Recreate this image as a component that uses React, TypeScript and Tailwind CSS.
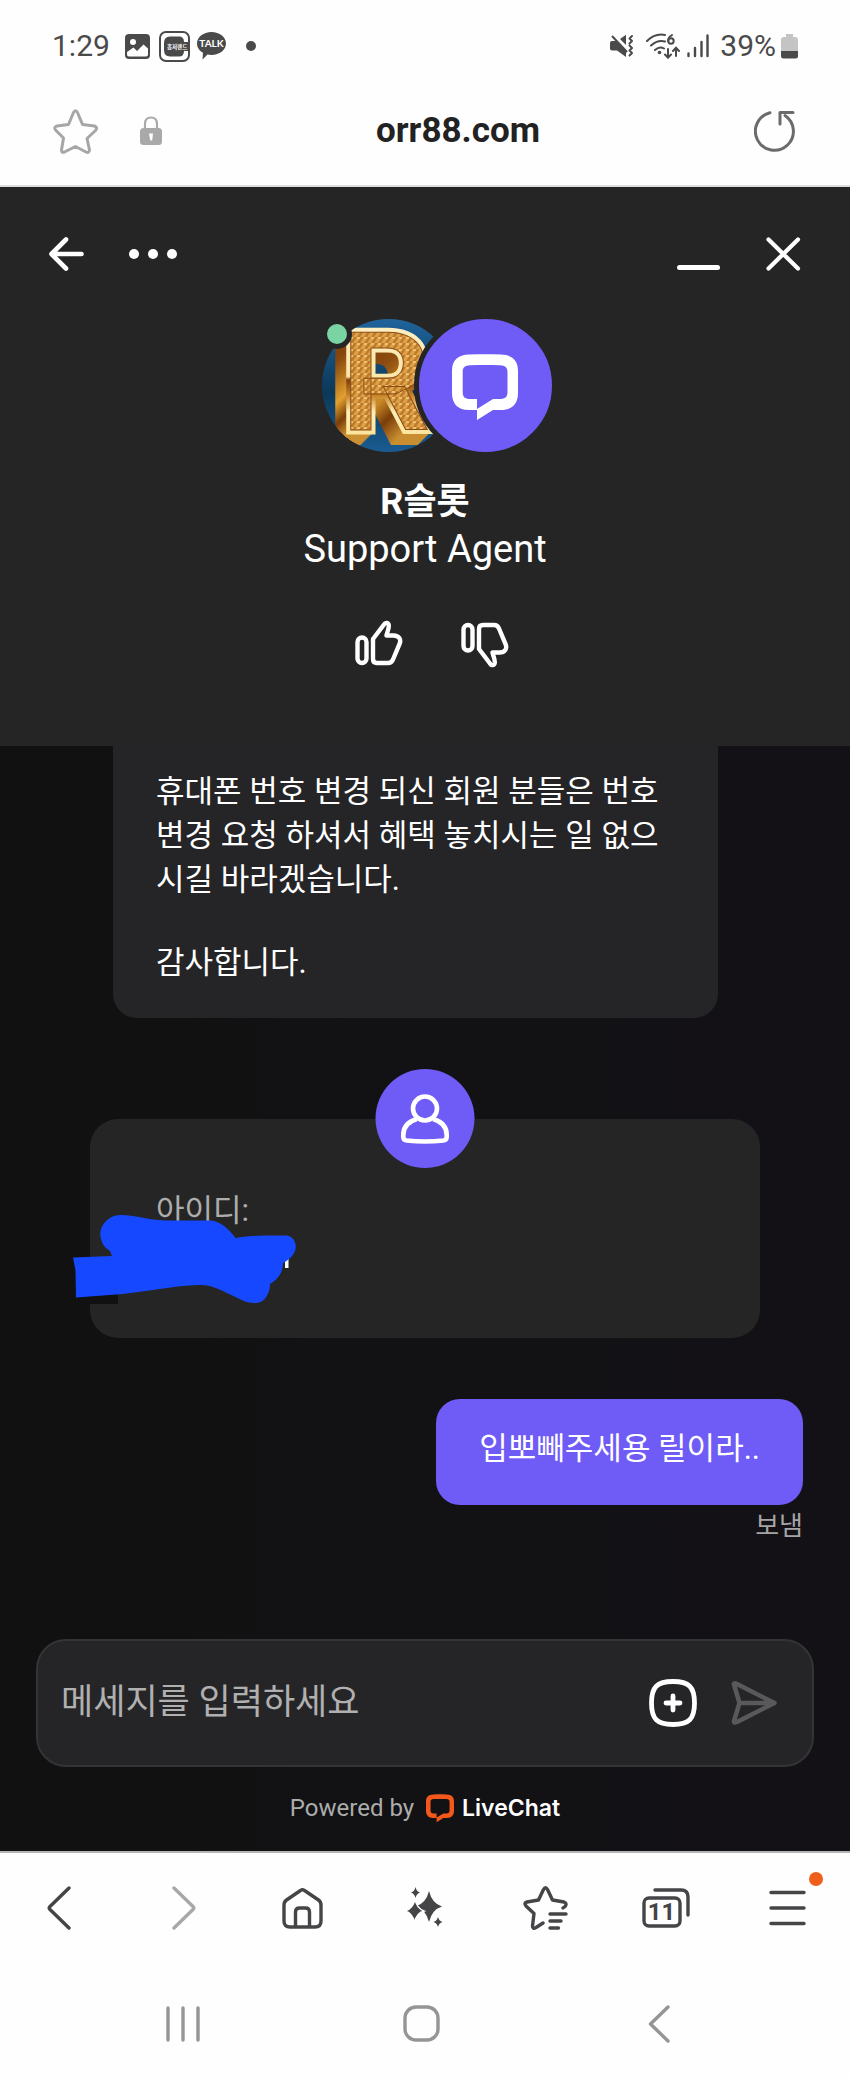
import React from "react";

type IconProps = { className?: string };

const LIVECHAT_PATH =
  "M25 56H17C6 56 0 50 0 39V17C0 6 6 1 17 .6C28 0 38 0 49 .6C60 1 66 6 66 17V39C66 50 60 56 49 56H41L25 66V55L41 45H48C53 45 55.5 43 55.5 38V18C55.5 13 53 11.5 48 11.2C38 10.8 28 10.8 18 11.2C13 11.5 10.7 13 10.7 18V38C10.7 43 13 45 18 45H25Z";

function LiveChatMark({ className }: IconProps) {
  return (
    <svg viewBox="0 0 66 67" className={className} fill="currentColor" aria-hidden="true">
      <path d={LIVECHAT_PATH} />
    </svg>
  );
}

function GalleryIcon() {
  return (
    <svg width="25" height="25" viewBox="0 0 25 25" aria-hidden="true">
      <rect width="25" height="25" rx="4" fill="#4a4a4a" />
      <circle cx="8" cy="8" r="3" fill="#fff" />
      <path d="M2 18L8.5 13.5L12 17L18.5 10.500L23 14.500V20.500Q23 22.500 21 22.500H4Q2 22.500 2 20.500Z" fill="#fff" />
    </svg>
  );
}

function ShopIcon() {
  return (
    <svg width="31" height="31" viewBox="0 0 31 31" aria-hidden="true">
      <rect x="1" y="1" width="29" height="29" rx="6" fill="#fff" stroke="#4a4a4a" strokeWidth="2" />
      <path d="M25 11Q25 5.500 20 5.500H11Q5 5.500 5 12V19Q5 25.500 11 25.500H20Q25 25.500 25 20H29V11Z" fill="#4a4a4a" />
      <text x="8" y="17.500" fontSize="5.500" fontWeight="700" fill="#fff" fontFamily="Noto Sans CJK KR, sans-serif">홈저랜드</text>
    </svg>
  );
}

function TalkIcon() {
  return (
    <svg width="29" height="28" viewBox="0 0 29 28" aria-hidden="true">
      <path d="M14.500 0C22.500 0 29 5 29 11.500S22.500 23 14.500 23C13 23 11.500 22.900 10.500 22.600L5.500 27.500L6 20.700C2.300 18.700 0 15.300 0 11.500C0 5 6.500 0 14.500 0Z" fill="#4a4a4a" />
      <text x="14.500" y="15.200" textAnchor="middle" fontSize="10" fontWeight="700" fill="#fff" fontFamily="Lato, sans-serif">TALK</text>
    </svg>
  );
}

function MuteIcon() {
  return (
    <svg width="24" height="24" viewBox="0 0 24 24" aria-hidden="true">
      <path d="M0 9Q0 7 2 7H6L16 17V23L7 16.500H2Q0 16.500 0 14.500Z" fill="#4a4a4a" />
      <path d="M10 5L16 .8V11Z" fill="#4a4a4a" />
      <path d="M2 2L17 18" stroke="#4a4a4a" strokeWidth="2" fill="none" />
      <path d="M22 2L19.500 4.500L22 7L19.500 9.500M19.500 11.500L22 14L19.500 16.500L22 19L19.500 21.500" stroke="#4a4a4a" strokeWidth="2" fill="none" strokeLinecap="round" strokeLinejoin="round" />
    </svg>
  );
}

function WifiIcon() {
  return (
    <svg width="34" height="26" viewBox="0 0 34 26" fill="none" stroke="#4a4a4a" strokeWidth="2" strokeLinecap="round" aria-hidden="true">
      <path d="M1 8Q9 0 19 2M5 12.500Q11.500 6.500 19 8.500M9 17Q13.500 13 18 15.500" />
      <circle cx="13.500" cy="19.500" r="1.800" fill="#4a4a4a" stroke="none" />
      <path d="M26 2Q22 4.500 22 8" />
      <circle cx="25" cy="8" r="2.700" />
      <path d="M22 16V24.500M19 21.500L22 24.700L25 21.500M30 23V15M27 18L30 14.800L33 18" />
    </svg>
  );
}

function SignalIcon() {
  return (
    <svg width="22" height="24" viewBox="0 0 22 24" stroke="#4a4a4a" strokeWidth="2.400" strokeLinecap="round" aria-hidden="true">
      <path d="M1.500 19.500V22M8 14V22M14.500 8V22M20.500 1.500V22" />
    </svg>
  );
}

function BatteryIcon() {
  return (
    <svg width="17" height="25" viewBox="0 0 17 25" aria-hidden="true">
      <path d="M5 0H12V3H14Q17 3 17 6V17H0V6Q0 3 3 3H5Z" fill="#c4c4c4" />
      <path d="M0 17H17V22Q17 24.500 14.500 24.500H2.500Q0 24.500 0 22Z" fill="#4a4a4a" />
    </svg>
  );
}

function GoldAvatar() {
  const layers = Array.from({ length: 13 }, (_, i) => 13 - i);
  return (
    <svg viewBox="0 0 133 133" className="block size-[133px] rounded-full" role="img" aria-label="R슬롯">
      <defs>
        <linearGradient id="sea" x1="0" y1="0" x2="0" y2="1">
          <stop offset="0" stopColor="#1f649c" />
          <stop offset=".55" stopColor="#0c3858" />
          <stop offset="1" stopColor="#1a5c92" />
        </linearGradient>
        <linearGradient id="side" x1="0" y1="0" x2="0" y2="1">
          <stop offset="0" stopColor="#5c2c0a" />
          <stop offset=".3" stopColor="#8a4a0e" />
          <stop offset=".55" stopColor="#e0a030" />
          <stop offset=".68" stopColor="#7a3d08" />
          <stop offset=".85" stopColor="#e9b040" />
          <stop offset="1" stopColor="#7c4208" />
        </linearGradient>
        <linearGradient id="rim" x1="0" y1="0" x2="0" y2="1">
          <stop offset="0" stopColor="#fff3cf" />
          <stop offset=".46" stopColor="#fbe6a8" />
          <stop offset=".48" stopColor="#7e3f0c" />
          <stop offset=".58" stopColor="#c9862a" />
          <stop offset=".68" stopColor="#fff0b8" />
          <stop offset="1" stopColor="#f8d478" />
        </linearGradient>
        <pattern id="weave" width="7" height="6" patternUnits="userSpaceOnUse">
          <rect width="7" height="6" fill="#dda248" />
          <path d="M0 6L4 0H7L3 6Z" fill="#bd7a2c" />
          <path d="M0 1H3" stroke="#f6ca7c" strokeWidth="1.500" />
        </pattern>
        <text id="gold-r" x="20" y="111" fontSize="138" fontWeight="700" fontFamily="Roboto, sans-serif">R</text>
      </defs>
      <rect width="133" height="133" fill="url(#sea)" />
      {layers.map((n) => (
        <use key={n} href="#gold-r" x={-n} y={n} fill="url(#side)" stroke="url(#side)" strokeWidth="5" />
      ))}
      <use href="#gold-r" fill="url(#rim)" stroke="url(#rim)" strokeWidth="9" strokeLinejoin="miter" />
      <use href="#gold-r" fill="url(#weave)" stroke="#8a4a12" strokeWidth="1" />
    </svg>
  );
}

function ThumbUp({ className }: IconProps) {
  return (
    <svg width="48" height="46" viewBox="0 0 48 46" className={className} fill="none" stroke="#fff" strokeWidth="4.400" strokeLinejoin="round" aria-hidden="true">
      <rect x="2.500" y="17.500" width="9" height="25.500" rx="4.500" />
      <path d="M18 19L29 4.500C30.500 2 33.500 2.500 33.800 5.500C34 9 32 12.500 31.500 15.500H38.500C44 15.500 46.500 19.500 44.500 24L38 39.500Q36.700 43 33 43H22Q18 43 18 39Z" />
    </svg>
  );
}

function PersonIcon() {
  return (
    <svg width="49" height="50" viewBox="0 0 49 50" fill="none" stroke="#fff" strokeWidth="4.600" aria-hidden="true">
      <circle cx="24.500" cy="14.500" r="12" />
      <path d="M16.500 25C7.500 27.500 2.800 33.500 2.800 41V43Q2.800 46 6 46.500Q24.500 48.500 43 46.500Q46.200 46 46.200 43V41C46.200 33.500 41.500 27.500 32.500 25" />
    </svg>
  );
}

function Scribble() {
  return (
    <svg width="224" height="90" viewBox="0 0 224 90" className="absolute top-24 -left-[17px]" aria-hidden="true">
      <rect x="17" y="78" width="28" height="11" fill="#111112" />
      <rect x="212" y="43" width="3.500" height="10" fill="#fff" />
      <path d="M0 42.500L39 41L37 36C28 31 26 20 28 14C32 4 40 0 48 0C61 0 75 5 92 5.500L138 5.500C147 6 156 14 162.500 23C180 20 197 20.500 214 20.500C222 22 225 31 221 38C219 42 214 46 210 48C210 58 204 65 197 69C197 78 192 87 184 88C173 89 166 83 156 79C146 74 138 70 128 70C108 70 90 74 50 79L3 82.500L2.500 55Z" fill="#1649ff" />
    </svg>
  );
}

function StatusBar() {
  return (
    <div className="flex h-[92px] items-center justify-between pr-[52px] pl-[52px] text-[30px] leading-9 text-[#4a4a4a]">
      <div className="flex items-center">
        <span className="mr-[15px]">1:29</span>
        <GalleryIcon />
        <span className="ml-[9px]"><ShopIcon /></span>
        <span className="ml-[7px]"><TalkIcon /></span>
        <span className="ml-5 size-[10px] rounded-full bg-[#4a4a4a]" />
      </div>
      <div className="flex items-center">
        <MuteIcon />
        <span className="ml-3"><WifiIcon /></span>
        <span className="ml-[7px]"><SignalIcon /></span>
        <span className="ml-[11px]">39%</span>
        <span className="ml-[5px]"><BatteryIcon /></span>
      </div>
    </div>
  );
}

function AddressBar() {
  return (
    <div className="border-b-2 border-[#dedede] pb-[15px]">
      <div className="flex h-[78px] items-center pr-[54px] pl-[53px]">
        <button type="button" aria-label="Bookmark">
          <svg width="45" height="45" viewBox="0 0 45 45" fill="none" stroke="#a6a6a6" strokeWidth="3" strokeLinejoin="round">
            <path d="M20.500 3.500Q22.500 0 24.500 3.500L29.500 15.500L41.500 17Q45 18.500 42.500 21.500L34 29.500L36.500 41Q36 44.500 33 43L22.500 37.500L11.500 43Q8.500 44.300 8.500 41L10.500 29L2.500 21Q.5 18 4 17L15.500 15.500Z" />
          </svg>
        </button>
        <svg width="22" height="30" viewBox="0 0 22 30" className="ml-[42px]" aria-hidden="true">
          <path d="M5 13V8Q5 1.500 11 1.500T17 8V13" fill="none" stroke="#a9a9a9" strokeWidth="2.200" />
          <rect y="12" width="22" height="17" rx="3.500" fill="#a9a9a9" />
          <path d="M9 17.500H13L12.200 24.500H10.300Z" fill="#fff" />
        </svg>
        <p className="grow text-center text-[35px] leading-[44px] font-bold text-[#222]">orr88.com</p>
        <button type="button" aria-label="Reload">
          <svg width="42" height="42" viewBox="0 0 42 42" fill="none" stroke="#6b6b6b" strokeWidth="3" strokeLinecap="round" strokeLinejoin="round">
            <path d="M16 2.800A19 19 0 1 0 31 5.500M26 14V2.500H39" />
          </svg>
        </button>
      </div>
    </div>
  );
}

function AgentHeader() {
  return (
    <header className="bg-[#252526] px-[49px] pt-[50px] pb-[78px] text-white">
      <div className="flex h-[33px] items-center">
        <button type="button" aria-label="Back">
          <svg width="35" height="34" viewBox="0 0 35 34" fill="none" stroke="#fff" strokeWidth="4.600" strokeLinecap="round" strokeLinejoin="round">
            <path d="M17 2.500L2.500 17L17 31.500M3 17H32.500" />
          </svg>
        </button>
        <button type="button" aria-label="More options" className="ml-[45px] flex gap-[9px]">
          <span className="size-[10px] rounded-full bg-white" />
          <span className="size-[10px] rounded-full bg-white" />
          <span className="size-[10px] rounded-full bg-white" />
        </button>
        <button type="button" aria-label="Minimize" className="ml-auto flex h-[33px] w-[43px] items-end">
          <span className="h-[5px] w-full rounded-full bg-white" />
        </button>
        <button type="button" aria-label="Close" className="ml-[46px]">
          <svg width="35" height="34" viewBox="0 0 35 34" fill="none" stroke="#fff" strokeWidth="4.200" strokeLinecap="round">
            <path d="M2.500 2.500L32 31.500M32 2.500L2.500 31.500" />
          </svg>
        </button>
      </div>
      <div className="mt-[49px] flex justify-center pl-7">
        <div className="relative">
          <GoldAvatar />
          <span className="absolute top-0 left-0 size-[30px] rounded-full border-[5px] border-[#252526] bg-[#79d3a2]" />
        </div>
        <div className="z-10 -ml-[41px] -my-[5px] grid size-[143px] place-items-center rounded-full border-[5px] border-[#252526] bg-[#6f5bf5]">
          <LiveChatMark className="mt-1 h-[67px] w-[66px]" />
        </div>
      </div>
      <h1 className="mt-[27px] text-center text-[36px] leading-[47px] font-bold">R슬롯</h1>
      <p className="text-center text-[38px] leading-[47px]">Support Agent</p>
      <div className="mt-[45px] flex justify-center gap-[58px] pl-[14px]">
        <button type="button" aria-label="Rate as good"><ThumbUp /></button>
        <button type="button" aria-label="Rate as bad" className="mt-1"><ThumbUp className="-scale-y-100" /></button>
      </div>
    </header>
  );
}

function Conversation() {
  return (
    <main className="flex grow flex-col text-[31px] leading-[44px] text-white">
      <div className="mr-[132px] ml-[113px] rounded-b-3xl bg-[#252527] px-[43px] pt-6 pb-[33px]">
        <p>휴대폰 번호 변경 되신 회원 분들은 번호 변경 요청 하셔서 혜택 놓치시는 일 없으시길 바라겠습니다.</p>
        <p className="mt-[39px]">감사합니다.</p>
      </div>
      <section className="relative mx-[90px] mt-[101px] h-[219px] rounded-[28px] bg-[#252526] px-[66px] pt-[70px]">
        <div className="absolute -top-[50px] left-1/2 grid size-[99px] -translate-x-1/2 place-items-center rounded-full bg-[#6f5bf5]">
          <PersonIcon />
        </div>
        <p className="text-[#adadad]">아이디:</p>
        <Scribble />
      </section>
      <div className="mt-[61px] mr-[47px] self-end rounded-3xl bg-[#6f5bf5] px-[43px] pt-7 pb-[34px]">
        <p>입뽀빼주세용 릴이라..</p>
      </div>
      <p className="mt-[5px] mr-[47px] self-end text-[26px] leading-8 text-[#a5a5a5]">보냄</p>
    </main>
  );
}

function Composer() {
  return (
    <footer className="px-9 pb-[25px]">
      <form className="flex h-[128px] items-center rounded-[30px] border-2 border-[#343436] bg-[#252527] pr-[34px] pl-[23px]" onSubmit={(e) => e.preventDefault()}>
        <input
          type="text"
          aria-label="메세지를 입력하세요"
          placeholder="메세지를 입력하세요"
          className="min-w-0 grow bg-transparent text-[35px] leading-[52px] text-white outline-none placeholder:text-[#b0b0b0]"
        />
        <button type="button" aria-label="Add attachment">
          <svg width="48" height="48" viewBox="0 0 48 48" fill="none" stroke="#fff" strokeWidth="4.800" strokeLinecap="round">
            <path d="M24 2.500C40 2.500 45.500 8 45.500 24S40 45.500 24 45.500S2.500 40 2.500 24S8 2.500 24 2.500Z" />
            <path d="M24 17V31M17 24H31" />
          </svg>
        </button>
        <button type="submit" aria-label="Send" className="ml-[34px]">
          <svg width="47" height="44" viewBox="0 0 47 44" fill="none" stroke="#59585a" strokeWidth="4.500" strokeLinecap="round" strokeLinejoin="round">
            <path d="M3 3.500Q2.500 1.500 6 3L43.500 22L6 41Q2.500 42.500 3 40L8.500 22ZM8.500 22H42" />
          </svg>
        </button>
      </form>
      <div className="mt-[23px] flex items-center justify-center text-2xl leading-9 text-[#acacac]">
        <span>Powered by</span>
        <LiveChatMark className="ml-3 h-[29px] w-[28px] text-[#f2571c]" />
        <span className="ml-2 font-['Inter'] text-[23px] leading-9 font-semibold text-white">LiveChat</span>
      </div>
    </footer>
  );
}

const LINE = {
  fill: "none",
  stroke: "#454447",
  strokeWidth: 3.4,
  strokeLinecap: "round" as const,
  strokeLinejoin: "round" as const,
};

function BrowserNav() {
  return (
    <nav className="grid h-[112px] grid-cols-7 place-items-center border-t-2 border-[#b5b5b5] pr-[2px]">
      <button type="button" aria-label="Go back" className="mr-1">
        <svg width="24" height="44" viewBox="0 0 24 44" {...LINE}>
          <path d="M22 2L3 20.500Q1.500 22 3 23.500L22 42" />
        </svg>
      </button>
      <button type="button" aria-label="Go forward" className="ml-1">
        <svg width="24" height="44" viewBox="0 0 24 44" {...LINE} stroke="#a8a8a8">
          <path d="M2 2L21 20.500Q22.500 22 21 23.500L2 42" />
        </svg>
      </button>
      <button type="button" aria-label="Home">
        <svg width="41" height="41" viewBox="0 0 41 41" {...LINE}>
          <path d="M18.500 2.500Q20.500 1 22.500 2.500L36.500 12Q39 13.800 39 17V33Q39 39 33 39H8Q2 39 2 33V17Q2 13.800 4.500 12Z" />
          <path d="M13.500 38V24Q13.500 20 17.500 20H23.500Q27.500 20 27.500 24V38" />
        </svg>
      </button>
      <button type="button" aria-label="Assistant">
        <svg width="38" height="42" viewBox="0 0 38 42" fill="#454447">
          <path d="M10.500 0Q11.500 4.500 15 5.500Q11.500 6.500 10.500 11Q9.500 6.500 6 5.500Q9.500 4.500 10.500 0Z" />
          <path d="M24 4Q27 16.500 37 19.500Q27 22.500 24 35Q21 22.500 10.500 19.500Q21 16.500 24 4Z" />
          <path d="M10 12Q11.500 21 19 24Q11.500 26 9.500 35.500Q7.500 26 0 24Q8 21.500 10 12Z" stroke="#fff" strokeWidth="1.500" />
          <path d="M33 30Q34 34 37.500 35Q34 36 33 40Q32 36 28.500 35Q32 34 33 30Z" />
        </svg>
      </button>
      <button type="button" aria-label="Bookmarks">
        <svg width="45" height="44" viewBox="0 0 45 44" {...LINE}>
          <path d="M20 37L13 41.500Q9.500 43.500 9.500 40L11 27.500L3 20Q.5 17 4 16L15.500 14L20.500 3.500Q22.500 0 24.500 3.500L29.500 14L41 16Q44.500 17.500 42 20.500L40 22" />
          <path d="M27 28H43M27 35H38M27 42H35.500" />
        </svg>
      </button>
      <button type="button" aria-label="Tabs">
        <svg width="48" height="40" viewBox="0 0 48 40" {...LINE}>
          <rect x="2" y="10" width="36" height="28" rx="5" />
          <path d="M13 2H39Q46 2 46 9V27" />
          <text x="19.500" y="32" textAnchor="middle" fontSize="24" fontWeight="700" fontFamily="Roboto, sans-serif" fill="#454447" stroke="none">11</text>
        </svg>
      </button>
      <button type="button" aria-label="Menu" className="relative">
        <svg width="37" height="36" viewBox="0 0 37 36" {...LINE}>
          <path d="M2 2.500H35M2 18H35M2 33.500H35" />
        </svg>
        <span className="absolute -top-[18px] -right-[17px] size-[14px] rounded-full bg-[#ee5f1c]" />
      </button>
    </nav>
  );
}

function SystemNav() {
  return (
    <div className="grid h-[115px] grid-cols-3 place-items-center pt-[6px] pr-[72px] pl-16">
      <button type="button" aria-label="Recent apps">
        <svg width="34" height="36" viewBox="0 0 34 36" {...LINE} stroke="#959496">
          <path d="M2 2V34M17 2V34M32 2V34" />
        </svg>
      </button>
      <button type="button" aria-label="Home screen">
        <svg width="37" height="37" viewBox="0 0 37 37" {...LINE} stroke="#959496">
          <rect x="2" y="2" width="33" height="33" rx="11" />
        </svg>
      </button>
      <button type="button" aria-label="System back">
        <svg width="22" height="38" viewBox="0 0 22 38" {...LINE} stroke="#959496">
          <path d="M20 2L2.500 19L20 36" />
        </svg>
      </button>
    </div>
  );
}

export default function App() {
  return (
    <div className="flex min-h-screen flex-col bg-[#fefefe] font-['Roboto','Noto_Sans_CJK_KR',sans-serif]">
      <StatusBar />
      <AddressBar />
      <div className="flex grow flex-col bg-linear-to-r from-[#111111] to-[#131116]">
        <AgentHeader />
        <Conversation />
        <Composer />
      </div>
      <BrowserNav />
      <SystemNav />
    </div>
  );
}
